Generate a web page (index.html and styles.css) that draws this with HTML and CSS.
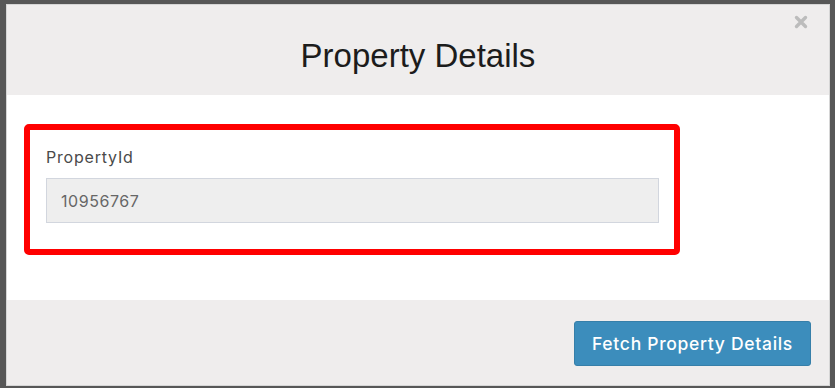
FILE: index.html
```html
<!DOCTYPE html>
<html>
<head>
<meta charset="utf-8">
<link rel="stylesheet" href="styles.css">
</head>
<body>
<div class="modal">
  <div class="modal-header">
    <h2 class="modal-title">Property Details</h2>
    <button class="close" aria-label="Close">
      <svg width="14" height="14" viewBox="0 0 14 14"><path d="M2.5 2.5 L11.5 11.5 M11.5 2.5 L2.5 11.5" stroke="#bcbcbc" stroke-width="3.4" stroke-linecap="round"/></svg>
    </button>
  </div>
  <div class="modal-body">
    <div class="highlight">
      <label class="field-label">PropertyId</label>
      <div class="field-input">10956767</div>
    </div>
  </div>
  <div class="modal-footer">
    <button class="btn-primary">Fetch Property Details</button>
  </div>
</div>
</body>
</html>
```
FILE: styles.css
```css
html, body {
  margin: 0;
  padding: 0;
  background: #575757;
  width: 835px;
  height: 388px;
  overflow: hidden;
}
.modal {
  margin: 4px 0 0 6px;
  width: 824px;
  height: 382px;
  box-sizing: border-box;
  border: 1px solid #d6d6d6;
  background: #fff;
  display: flex;
  flex-direction: column;
  position: relative;
}
.modal-header {
  background: #efeded;
  height: 90px;
  box-sizing: border-box;
  padding-top: 33px;
  text-align: center;
}
.modal-title {
  margin: 0;
  font-family: "Liberation Sans", Arial, sans-serif;
  font-weight: normal;
  font-size: 33px;
  line-height: 36px;
  color: #1c1c1c;
}
.close {
  position: absolute;
  top: 10px;
  right: 21px;
  width: 14px;
  height: 14px;
  padding: 0;
  border: 0;
  background: none;
  display: flex;
}
.modal-body {
  height: 205px;
  box-sizing: border-box;
  padding: 29px 0 0 17px;
  background: #fff;
}
.highlight {
  width: 656px;
  height: 131px;
  box-sizing: border-box;
  border: 6px solid #ff0000;
  border-radius: 5px;
  padding: 17px 15px 0 16px;
  display: flex;
  flex-direction: column;
}
.field-label {
  font-family: Inter, "Open Sans", sans-serif;
  font-size: 16px;
  line-height: 20px;
  color: #4a4a4a;
  letter-spacing: 0.8px;
  margin-bottom: 11px;
}
.field-input {
  height: 45px;
  box-sizing: border-box;
  background: #eeeeee;
  border: 1px solid #d2d6de;
  padding: 0 14px;
  display: flex;
  align-items: center;
  font-family: Inter, "Open Sans", sans-serif;
  font-size: 16px;
  letter-spacing: 0.55px;
  color: #666;
}
.modal-footer {
  flex: 1;
  background: #efeded;
  display: flex;
  justify-content: flex-end;
  align-items: flex-start;
  padding: 21px 18px 0 0;
}
.btn-primary {
  width: 237px;
  height: 45px;
  border: 1px solid #367fa9;
  border-radius: 3px;
  background: #3c8dbc;
  color: #fff;
  font-family: Inter, "Open Sans", sans-serif;
  font-weight: 500;
  font-size: 17.5px;
  letter-spacing: 0.7px;
  padding: 0;
}
```
